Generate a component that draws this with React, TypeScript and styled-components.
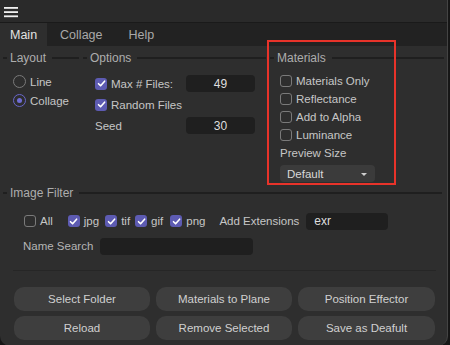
import React from "react"
import styled, { createGlobalStyle } from "styled-components"

const Color = {
    outside: "#161616",
    topbar: "#2a2a2a",
    tabbar: "#222222",
    panel: "#2e2e2e",
    line: "#1f1f1f",
    field: "#1f1f1f",
    button: "#3e3e3e",
    text: "#c6c6c6",
    dim: "#adadad",
    accent: "#5d5bb2",
    red: "#e8332a",
}

const GlobalStyle = createGlobalStyle`
    html, body {
        margin: 0;
        padding: 0;
        background: ${Color.outside};
    }
    body {
        font-family: "Liberation Sans", Arial, sans-serif;
        font-size: 11.5px;
        color: ${Color.text};
    }
`

const Window = styled.div`
    width: 447px;
    height: 346px;
    background: ${Color.panel};
    border-right: 1px solid #444;
    border-radius: 0 0 10px 10px;
    overflow: hidden;
    display: flex;
    flex-direction: column;
`

const TopBar = styled.div`
    height: 23px;
    background: ${Color.topbar};
    border-bottom: 1px solid #1a1a1a;
    display: flex;
    align-items: center;
    padding: 2px 0 0 4px;
    box-sizing: border-box;
`

const TabBar = styled.div`
    height: 23px;
    background: ${Color.tabbar};
    display: flex;
`

const Tab = styled.div<{ $active?: boolean }>`
    display: flex;
    align-items: center;
    padding: ${(p) => (p.$active ? "0 10px" : "0 13px")};
    background: ${(p) => (p.$active ? Color.panel : "transparent")};
    color: ${(p) => (p.$active ? "#e2e2e2" : "#a9a9a9")};
    font-size: 12.5px;
`

const TopGroups = styled.div`
    display: grid;
    grid-template-columns: 76px 183px 174px;
    column-gap: 4px;
    padding: 5px 5px 0 3px;
    height: 131px;
`

const Group = styled.div`
    position: relative;
    display: flex;
    flex-direction: column;
`

const GroupHead = styled.div`
    display: flex;
    align-items: center;
    gap: 3px;
    height: 14px;
    font-size: 12px;
    color: ${Color.dim};
    &::before {
        content: "";
        width: 4px;
        height: 2px;
        background: ${Color.line};
    }
    &::after {
        content: "";
        flex: 1;
        height: 2px;
        margin-left: 3px;
        background: ${Color.line};
    }
`

const Highlight = styled.div`
    position: absolute;
    left: -3px;
    top: -11px;
    width: 129px;
    height: 145px;
    border: 2px solid ${Color.red};
    box-sizing: border-box;
    pointer-events: none;
`

const Column = styled.div<{ $left: number; $top: number; $row: number }>`
    display: flex;
    flex-direction: column;
    padding-left: ${(p) => p.$left}px;
    margin-top: ${(p) => p.$top}px;
    & > * {
        min-height: ${(p) => p.$row}px;
    }
`

const Row = styled.label`
    display: flex;
    align-items: center;
    gap: 4px;
    white-space: nowrap;
`

const OptionsGrid = styled.div`
    display: grid;
    grid-template-columns: 91px 69px;
    grid-auto-rows: 21px;
    align-items: center;
    padding-left: 12px;
    margin-top: 8px;
`

const Field = styled.div<{ $align?: string; $width?: number }>`
    height: 17px;
    width: ${(p) => (p.$width ? `${p.$width}px` : "auto")};
    background: ${Color.field};
    border-radius: 4px;
    display: flex;
    align-items: center;
    justify-content: ${(p) => p.$align || "center"};
    padding: 0 8px;
    box-sizing: border-box;
    font-size: 12px;
    color: #dedede;
`

const Plain = styled.span<{ $indent?: number }>`
    padding-left: ${(p) => p.$indent || 0}px;
    display: flex;
    align-items: center;
`

const Dropdown = styled.div`
    margin-top: 3px;
    width: 95px;
    height: 17px;
    background: #3b3b3b;
    border-radius: 4px;
    display: flex;
    align-items: center;
    justify-content: space-between;
    padding: 0 8px 0 7px;
    box-sizing: border-box;
    color: #d8d8d8;
    &::after {
        content: "";
        border-left: 3.5px solid transparent;
        border-right: 3.5px solid transparent;
        border-top: 3.5px solid #cfcfcf;
        margin-top: 2px;
    }
`

const FilterSection = styled.div`
    padding: 4px 5px 0 3px;
`

const FilterRow = styled.div`
    display: flex;
    align-items: center;
    height: 20px;
    padding-left: 21px;
    margin-top: 11px;
`

const Item = styled.label<{ $after: number }>`
    display: flex;
    align-items: center;
    gap: 4px;
    margin-right: ${(p) => p.$after}px;
    white-space: nowrap;
`

const SearchRow = styled.div`
    display: flex;
    align-items: center;
    height: 20px;
    margin-top: 5px;
    padding-left: 20px;
    gap: 7px;
    color: #b5b5b5;
`

const Divider = styled.div`
    margin: 14px 11px 0 13px;
    height: 1px;
    background: #262626;
`

const Buttons = styled.div`
    display: grid;
    grid-template-columns: 136px 136px 137px;
    grid-auto-rows: 24px;
    column-gap: 6px;
    row-gap: 5px;
    padding: 16px 0 0 14px;
`

const Button = styled.button`
    border: none;
    border-radius: 10px;
    background: ${Color.button};
    color: #d0d0d0;
    font-family: inherit;
    font-size: 11.5px;
    padding: 0;
`

const Box = styled.span<{ $on?: boolean }>`
    width: 12px;
    height: 12px;
    box-sizing: border-box;
    border-radius: 3px;
    flex-shrink: 0;
    display: inline-flex;
    align-items: center;
    justify-content: center;
    background: ${(p) => (p.$on ? Color.accent : "transparent")};
    border: ${(p) => (p.$on ? "none" : "1.5px solid #7a7a7a")};
`

const Circle = styled.span<{ $on?: boolean }>`
    width: 13px;
    height: 13px;
    box-sizing: border-box;
    border-radius: 50%;
    flex-shrink: 0;
    display: inline-flex;
    align-items: center;
    justify-content: center;
    border: 1.5px solid ${(p) => (p.$on ? "#6866c9" : "#7a7a7a")};
    &::after {
        content: "";
        width: 5px;
        height: 5px;
        border-radius: 50%;
        background: ${(p) => (p.$on ? "#6f6dd6" : "transparent")};
    }
`

const Check = ({ on }: { on?: boolean }) => (
    <Box $on={on}>
        {on && (
            <svg width="9" height="9" viewBox="0 0 9 9">
                <polyline points="1.5,4.7 3.6,6.8 7.6,2.2" fill="none" stroke="#fff" strokeWidth="1.6" strokeLinecap="round" strokeLinejoin="round" />
            </svg>
        )}
    </Box>
)

const Menu = () => (
    <svg width="15" height="11" viewBox="0 0 15 11">
        <rect x="0" y="0" width="14" height="1.8" fill="#f0f0f0" />
        <rect x="0" y="4.2" width="14" height="1.8" fill="#f0f0f0" />
        <rect x="0" y="8.4" width="14" height="1.8" fill="#f0f0f0" />
    </svg>
)

const App: React.FC = () => (
    <>
        <GlobalStyle />
        <Window>
            <TopBar>
                <Menu />
            </TopBar>
            <TabBar>
                <Tab $active>Main</Tab>
                <Tab>Collage</Tab>
                <Tab>Help</Tab>
            </TabBar>
            <TopGroups>
                <Group>
                    <GroupHead>Layout</GroupHead>
                    <Column $left={10} $top={7} $row={19}>
                        <Row><Circle />Line</Row>
                        <Row><Circle $on />Collage</Row>
                    </Column>
                </Group>
                <Group>
                    <GroupHead>Options</GroupHead>
                    <OptionsGrid>
                        <Row><Check on />Max # Files:</Row>
                        <Field>49</Field>
                        <Row><Check on />Random Files</Row>
                        <span />
                        <span>Seed</span>
                        <Field>30</Field>
                    </OptionsGrid>
                </Group>
                <Group>
                    <Highlight />
                    <GroupHead>Materials</GroupHead>
                    <Column $left={10} $top={7} $row={18}>
                        <Row><Check />Materials Only</Row>
                        <Row><Check />Reflectance</Row>
                        <Row><Check />Add to Alpha</Row>
                        <Row><Check />Luminance</Row>
                        <Plain>Preview Size</Plain>
                    </Column>
                    <Plain $indent={10}>
                        <Dropdown>Default</Dropdown>
                    </Plain>
                </Group>
            </TopGroups>
            <FilterSection>
                <GroupHead>Image Filter</GroupHead>
                <FilterRow>
                    <Item $after={15}><Check />All</Item>
                    <Item $after={6}><Check on />jpg</Item>
                    <Item $after={5}><Check on />tif</Item>
                    <Item $after={7}><Check on />gif</Item>
                    <Item $after={14}><Check on />png</Item>
                    <Item $after={7}>Add Extensions</Item>
                    <Field $align="flex-start" $width={82}>exr</Field>
                </FilterRow>
                <SearchRow>
                    Name Search
                    <Field $width={153} />
                </SearchRow>
            </FilterSection>
            <Divider />
            <Buttons>
                <Button>Select Folder</Button>
                <Button>Materials to Plane</Button>
                <Button>Position Effector</Button>
                <Button>Reload</Button>
                <Button>Remove Selected</Button>
                <Button>Save as Deafult</Button>
            </Buttons>
        </Window>
    </>
)

export default App
